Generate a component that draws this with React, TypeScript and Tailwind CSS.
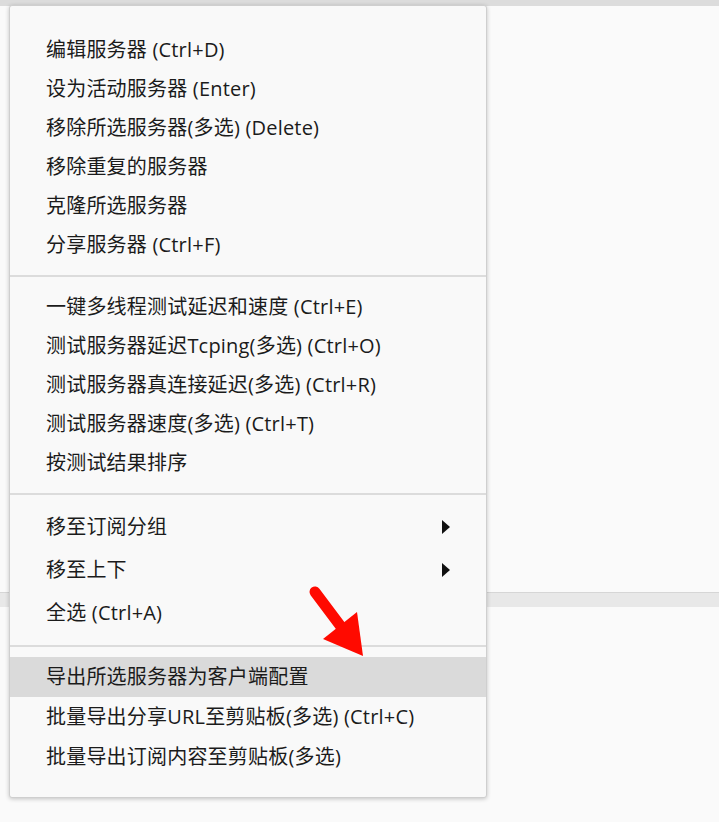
import React from "react";

type Item = { label: string; sub?: boolean; active?: boolean };

const groups: { h: string; items: Item[] }[] = [
  {
    h: "h-[39px]",
    items: [
      { label: "编辑服务器 (Ctrl+D)" },
      { label: "设为活动服务器 (Enter)" },
      { label: "移除所选服务器(多选) (Delete)" },
      { label: "移除重复的服务器" },
      { label: "克隆所选服务器" },
      { label: "分享服务器 (Ctrl+F)" },
    ],
  },
  {
    h: "h-[39px]",
    items: [
      { label: "一键多线程测试延迟和速度 (Ctrl+E)" },
      { label: "测试服务器延迟Tcping(多选) (Ctrl+O)" },
      { label: "测试服务器真连接延迟(多选) (Ctrl+R)" },
      { label: "测试服务器速度(多选) (Ctrl+T)" },
      { label: "按测试结果排序" },
    ],
  },
  {
    h: "h-[43px]",
    items: [
      { label: "移至订阅分组", sub: true },
      { label: "移至上下", sub: true },
      { label: "全选 (Ctrl+A)" },
    ],
  },
  {
    h: "h-[40px]",
    items: [
      { label: "导出所选服务器为客户端配置", active: true },
      { label: "批量导出分享URL至剪贴板(多选) (Ctrl+C)" },
      { label: "批量导出订阅内容至剪贴板(多选)" },
    ],
  },
];

const MenuRow = ({ item, h }: { item: Item; h: string }) => (
  <div
    className={`${h} flex items-center pl-[36px] pr-[36px] ${
      item.active ? "bg-[#dadada]" : ""
    }`}
  >
    <span className="flex-1 whitespace-nowrap tracking-[0.2px]">{item.label}</span>
    {item.sub && (
      <svg width="8" height="14" viewBox="0 0 8 14">
        <polygon points="0,0 8,7 0,14" fill="#111" />
      </svg>
    )}
  </div>
);

const Separator = () => <div className="mt-[11px] mb-[10px] h-[2px] bg-[#dcdcdc]" />;

export default function App() {
  return (
    <div className="relative w-[719px] h-[822px] overflow-hidden bg-[#fafafa] font-['Open_Sans','Noto_Sans_CJK_SC',sans-serif] text-[#1b1b1b]">
      <div className="h-[6px] bg-[#dcdcdc]" />
      <div className="h-[586px]" />
      <div className="h-[15px] bg-[#e8e8e8] border-t border-[#d6d6d6]" />

      <div className="absolute left-[9px] top-[5px] w-[478px] h-[793px] bg-[#f9f9f9] border border-[#cfcfcf] rounded-[3px] shadow-[0_1px_4px_rgba(0,0,0,0.22)] pt-[24px] text-[20px] leading-none">
        {groups.map((g, gi) => (
          <div key={gi}>
            {gi > 0 && <Separator />}
            {g.items.map((it) => (
              <MenuRow key={it.label} item={it} h={g.h} />
            ))}
          </div>
        ))}
      </div>

      <svg
        className="absolute left-[300px] top-[578px]"
        width="75"
        height="90"
        viewBox="300 578 75 90"
      >
        <line x1="315" y1="592" x2="342" y2="628" stroke="#ff0a00" strokeWidth="11" strokeLinecap="round" />
        <polygon points="357,612 363,656 323,639" fill="#ff0a00" />
      </svg>
    </div>
  );
}
